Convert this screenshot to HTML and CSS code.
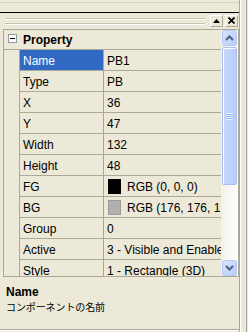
FILE: index.html
```html
<!DOCTYPE html>
<html lang="ja">
<head>
  <meta charset="UTF-8" />
  <title>Property</title>
  <link rel="stylesheet" href="styles.css">
</head>
<body>
  <div class="frame">
    <div class="pane">
      <div class="caption"></div>
      <div class="toolbar">
        <div class="gripper"></div>
        <button class="tb-btn" title="Move up">
          <svg width="7" height="4" viewBox="0 0 7 4"><path d="M0 4h7L3.5 0z" fill="#000"/></svg>
        </button>
        <button class="tb-btn" title="Close">
          <svg width="7" height="7" viewBox="0 0 7 7"><path d="M0.5 0.5l6 6M6.5 0.5l-6 6" stroke="#000" stroke-width="1.8" fill="none"/></svg>
        </button>
      </div>

      <div class="grid">
        <div class="rows">
          <div class="category">
            <span class="margin"><span class="toggle"></span></span>
            <span class="cat-name">Property</span>
          </div>
          <div class="row selected"><span class="margin"></span><span class="key">Name</span><span class="val">PB1</span></div>
          <div class="row"><span class="margin"></span><span class="key">Type</span><span class="val">PB</span></div>
          <div class="row"><span class="margin"></span><span class="key">X</span><span class="val">36</span></div>
          <div class="row"><span class="margin"></span><span class="key">Y</span><span class="val">47</span></div>
          <div class="row"><span class="margin"></span><span class="key">Width</span><span class="val">132</span></div>
          <div class="row"><span class="margin"></span><span class="key">Height</span><span class="val">48</span></div>
          <div class="row"><span class="margin"></span><span class="key">FG</span><span class="val"><span class="swatch" style="background:#000000"></span>RGB (0, 0, 0)</span></div>
          <div class="row"><span class="margin"></span><span class="key">BG</span><span class="val"><span class="swatch light" style="background:#b0b0b0"></span>RGB (176, 176, 176)</span></div>
          <div class="row"><span class="margin"></span><span class="key">Group</span><span class="val">0</span></div>
          <div class="row"><span class="margin"></span><span class="key">Active</span><span class="val">3 - Visible and Enabled</span></div>
          <div class="row"><span class="margin"></span><span class="key">Style</span><span class="val">1 - Rectangle (3D)</span></div>
        </div>
        <div class="scrollbar">
          <div class="sb-btn">
            <svg width="9" height="6" viewBox="0 0 9 6"><path d="M1 5l3.5-3.5L8 5" stroke="#4d6185" stroke-width="2" fill="none"/></svg>
          </div>
          <div class="sb-thumb"><span class="grip"></span></div>
          <div class="sb-track"></div>
          <div class="sb-btn">
            <svg width="9" height="6" viewBox="0 0 9 6"><path d="M1 1l3.5 3.5L8 1" stroke="#4d6185" stroke-width="2" fill="none"/></svg>
          </div>
        </div>
      </div>

      <div class="desc">
        <div class="desc-title">Name</div>
        <div class="desc-text">コンポーネントの名前</div>
      </div>
    </div>
    <div class="edge"></div>
  </div>
</body>
</html>
```

FILE: styles.css
```css
:root {
  --face: #ece9d8;
  --line: #aca899;
  --select: #316ac5;
  --sb-border: #b4c8f6;
}
* { box-sizing: border-box; }
body {
  margin: 0;
  background-color: var(--face);
  font-family: "Liberation Sans", Arial, sans-serif;
  font-size: 12px;
  color: #000;
}
.frame {
  display: flex;
  width: 248px;
  height: 332px;
}
.pane {
  width: 241px;
  height: 332px;
  border-right: 1px solid var(--line);
  display: flex;
  flex-direction: column;
}
.edge {
  width: 7px;
  border-left: 1px solid #fff;
  border-right: 1px solid var(--line);
  margin-right: 1px;
}
.caption {
  height: 11px;
  margin-top: 2px;
  border-top: 1px solid #d6d2c2;
  border-bottom: 1px solid #000;
}
.toolbar {
  height: 15px;
  display: flex;
  align-items: center;
  gap: 2px;
  padding: 0 1px 0 5px;
}
.gripper {
  flex: 1;
  height: 6px;
  margin-top: 1px;
  margin-right: 3px;
  border-top: 1px solid #c5c2b2;
  border-bottom: 1px solid #c5c2b2;
  box-shadow: inset 0 1px 0 #fff, 0 1px 0 #fff;
}
.tb-btn {
  width: 13px;
  height: 12px;
  padding: 0;
  margin: 0;
  border: 1px solid;
  border-color: #fff #aca899 #aca899 #fff;
  background-color: var(--face);
  display: flex;
  align-items: center;
  justify-content: center;
}
.grid {
  margin: 1px 0 0 3px;
  width: 236px;
  height: 248px;
  border: 1px solid var(--line);
  display: flex;
  overflow: hidden;
}
.rows {
  flex: 1;
  overflow: hidden;
}
.margin {
  width: 16px;
  flex: none;
  align-self: stretch;
  border-right: 1px solid var(--line);
  background-color: var(--face);
  display: flex;
  justify-content: center;
  padding-top: 4px;
}
.category {
  display: flex;
  height: 20px;
  border-bottom: 1px solid var(--line);
  background-color: var(--face);
}
.category .margin { border-right: none; }
.toggle {
  width: 9px;
  height: 9px;
  border: 1px solid #919b9c;
  background-color: #fff;
  position: relative;
}
.toggle::after {
  content: "";
  position: absolute;
  left: 1px;
  top: 3px;
  width: 5px;
  height: 1px;
  background-color: #000;
}
.cat-name {
  font-weight: bold;
  line-height: 19px;
  padding-left: 3px;
  padding-top: 1px;
}
.row {
  display: flex;
  height: 21px;
}
.key, .val {
  border-bottom: 1px solid var(--line);
  line-height: 20px;
  padding-top: 1px;
  white-space: nowrap;
  overflow: hidden;
}
.key {
  width: 84px;
  flex: none;
  padding-left: 3px;
  border-right: 1px solid var(--line);
}
.val {
  flex: 1;
  padding-left: 3px;
  display: flex;
  align-items: center;
}
.selected .key {
  background-color: var(--select);
  color: #fff;
}
.swatch {
  width: 13px;
  height: 15px;
  flex: none;
  border: 1px solid #000;
  margin: 0 6px 0 1px;
}
.swatch.light { border-color: #9a9a9a; }
.scrollbar {
  width: 17px;
  flex: none;
  display: flex;
  flex-direction: column;
  background: linear-gradient(to right, #f3f1ec, #fefefb);
  padding: 0 1px;
}
.sb-btn {
  height: 16px;
  flex: none;
  border: 1px solid #fff;
  border-radius: 2px;
  outline: 1px solid var(--sb-border);
  outline-offset: -1px;
  background: linear-gradient(135deg, #d8e4fd, #b9cdfa);
  display: flex;
  align-items: center;
  justify-content: center;
}
.sb-thumb {
  height: 138px;
  flex: none;
  margin-top: 1px;
  border: 1px solid #a9bff2;
  border-radius: 2px;
  box-shadow: inset 1px 1px 0 #fff;
  background: linear-gradient(to right, #c9d8fc, #b8cdfb);
  display: flex;
  align-items: center;
  justify-content: center;
}
.grip {
  width: 7px;
  height: 7px;
  background: repeating-linear-gradient(to bottom, #eef3fe 0 1px, #8cb0f8 1px 2px);
}
.sb-track { flex: 1; }
.desc {
  flex: 1;
  padding: 8px 6px 0;
  border-bottom: 1px solid var(--line);
  box-shadow: 0 1px 0 #fff;
  margin-bottom: 2px;
}
.desc-title {
  font-weight: bold;
  line-height: 14px;
}
.desc-text {
  font-family: "Noto Sans CJK JP", sans-serif;
  font-size: 10px;
  line-height: 16px;
  letter-spacing: -0.1px;
}
```
